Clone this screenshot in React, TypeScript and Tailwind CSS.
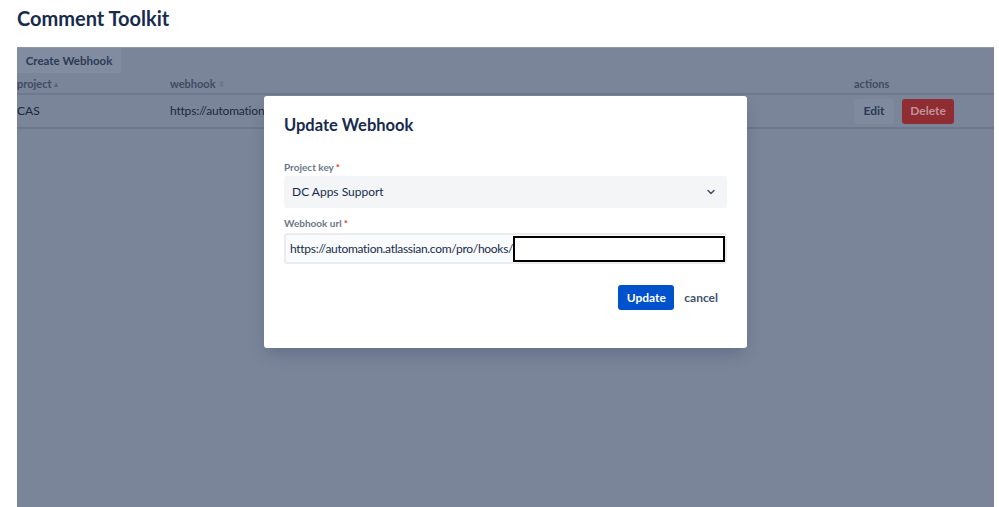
import React from 'react';
import { ChevronDown } from 'lucide-react';

const font = { fontFamily: 'Lato, "Noto Sans", sans-serif' };

export default function App() {
  return (
    <div className="relative h-[507px] w-[999px] overflow-hidden bg-white text-[#172b4d]" style={font}>
      {/* Page header */}
      <h1 className="pl-[17px] pt-[5px] text-[20px] font-bold leading-[26px] text-[#172b4d]">Comment Toolkit</h1>

      {/* App frame, dimmed by the modal blanket */}
      <div className="ml-[17px] mt-[16px] h-[460px] w-[977px] border-t border-[#8d97a9] bg-[#7a8599]">
        <div className="flex">
          <button className="h-[25px] w-[104px] bg-[#818ca0] text-[11.5px] font-bold text-[#2c3a55]">Create Webhook</button>
        </div>

        <div className="mt-[2px] grid h-[20px] grid-cols-[153px_684px_1fr] items-center border-b-2 border-[#6e798d] text-[11px] font-bold text-[#3f4b62]">
          <span className="flex items-center gap-[2px]">project<span className="text-[8px] text-[#5a6579]">▴</span></span>
          <span className="flex items-center gap-[2px]">webhook<span className="text-[8px] text-[#6a7589]">⇕</span></span>
          <span>actions</span>
        </div>

        <div className="grid h-[34px] grid-cols-[153px_684px_1fr] items-center border-b-2 border-[#6e798d] text-[12px] text-[#1a2842]">
          <span>CAS</span>
          <span className="whitespace-nowrap tracking-[-0.2px]">https://automation</span>
          <div className="flex items-center gap-[8px]">
            <button className="h-[25px] w-[40px] rounded-[3px] bg-[#7f8a9e] text-[12px] font-bold text-[#2c3a55]">Edit</button>
            <button className="h-[25px] w-[52px] rounded-[3px] bg-[#8f2d32] text-[12px] font-bold text-[#c1929a]">Delete</button>
          </div>
        </div>
      </div>

      {/* Modal dialog */}
      <div className="absolute left-[264px] top-[96px] flex h-[252px] w-[483px] flex-col rounded-[3px] bg-white px-[20px] pt-[17px] shadow-[0_8px_16px_-4px_rgba(9,30,66,0.25)]">
        <h2 className="text-[16.5px] font-bold leading-[24px] text-[#172b4d]">Update Webhook</h2>

        <label className="mt-[23px] text-[10px] font-bold leading-[14px] text-[#6b778c]">
          Project key<span className="ml-[2px] text-[#de350b]">*</span>
        </label>
        <div className="mt-[2px] flex h-[32px] items-center justify-between rounded-[3px] bg-[#f4f5f7] pl-[8px] pr-[10px] text-[12px] text-[#172b4d]">
          <span>DC Apps Support</span>
          <ChevronDown className="h-[12px] w-[12px] text-[#42526e]" strokeWidth={3} />
        </div>

        <label className="mt-[8px] text-[10px] font-bold leading-[14px] text-[#6b778c]">
          Webhook url<span className="ml-[2px] text-[#de350b]">*</span>
        </label>
        <div className="mt-[3px] flex h-[31px] items-center rounded-[3px] border-2 border-[#ebecf0] bg-[#fafbfc] pl-[4px] text-[12px] text-[#172b4d]">
          <span className="tracking-[-0.3px]">https://automation.atlassian.com/pro/hooks/</span>
          <span className="h-[26px] flex-1 border-2 border-black bg-white" />
        </div>

        <div className="mt-[21px] flex items-center justify-end gap-[10px] pr-[9px]">
          <button className="h-[25px] w-[56px] rounded-[3px] bg-[#0052cc] text-[12px] font-bold text-white">Update</button>
          <button className="text-[12px] font-bold text-[#42526e]">cancel</button>
        </div>
      </div>
    </div>
  );
}
